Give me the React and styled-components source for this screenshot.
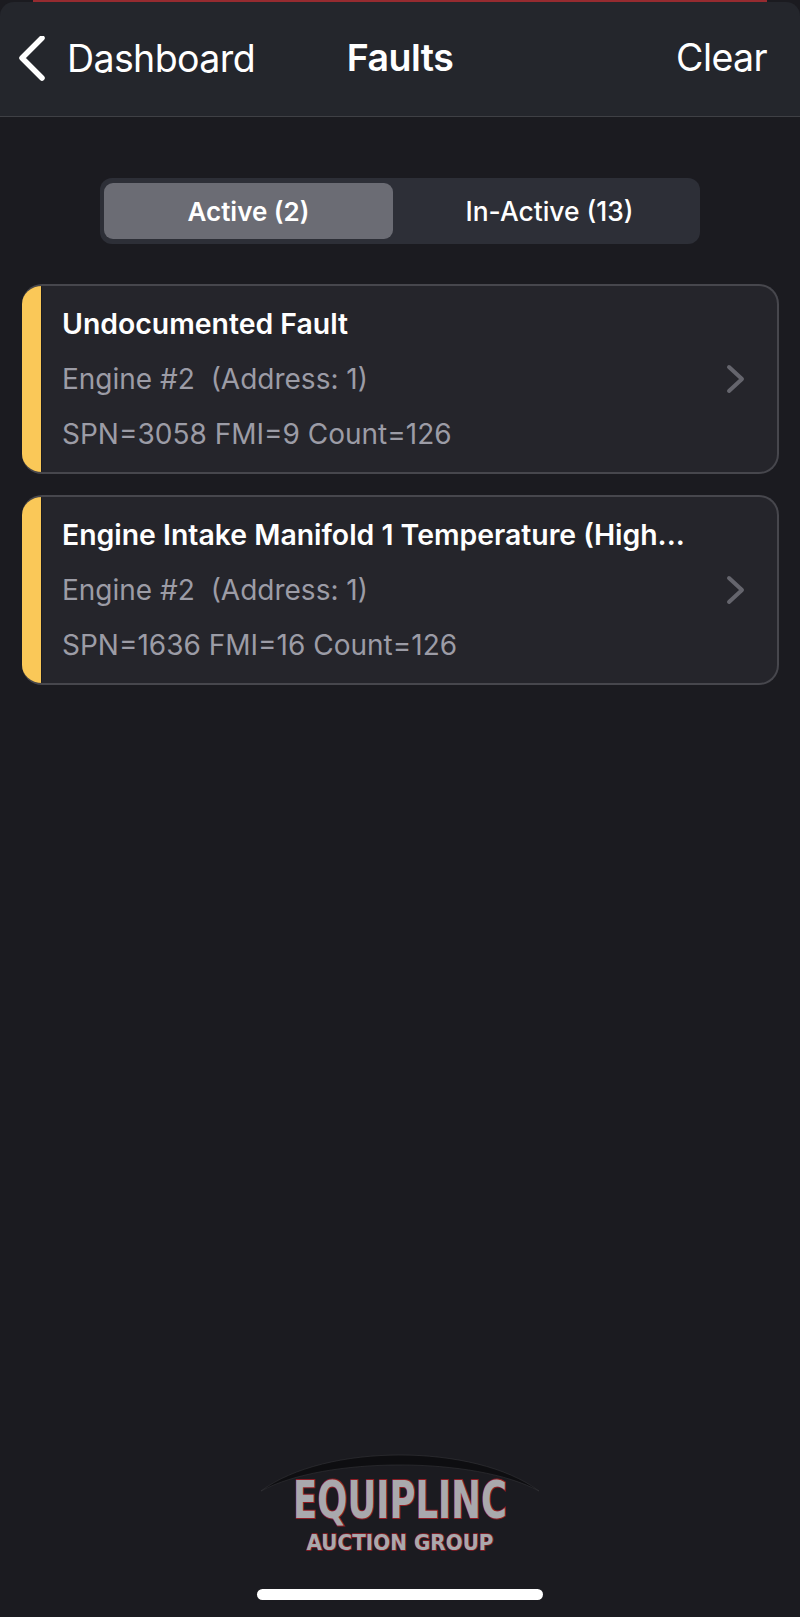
import React from "react";
import styled, { createGlobalStyle } from "styled-components";

const GlobalStyle = createGlobalStyle`
  html, body {
    margin: 0;
    padding: 0;
    background: #1b1b20;
  }
  * {
    box-sizing: border-box;
  }
`;

const Page = styled.div`
  width: 800px;
  height: 1617px;
  display: flex;
  flex-direction: column;
  background: #1b1b20;
  font-family: Inter, "Liberation Sans", sans-serif;
  color: #fff;
  overflow: hidden;
`;
const TopLine = styled.div`
  height: 3px;
  margin: 0 33px 0 33px;
  background: #962b30;
  flex-shrink: 0;
`;
const Header = styled.div`
  height: 115px;
  flex-shrink: 0;
  display: flex;
  align-items: flex-start;
  justify-content: space-between;
  padding: 34px 33px 0 18px;
  background: #24262c;
  border-radius: 14px 14px 0 0;
  border-bottom: 1px solid #3f4045;
  margin-top: -1px;
`;
const BackLink = styled.div`
  display: flex;
  align-items: center;
  gap: 21px;
  width: 311px;
  font-size: 37.5px;
  line-height: 44px;
  letter-spacing: -0.6px;
`;
const HeaderTitle = styled.div`
  font-size: 37.5px;
  line-height: 44px;
  font-weight: 600;
  letter-spacing: -0.5px;
`;
const HeaderAction = styled.div`
  width: 296px;
  text-align: right;
  font-size: 37.5px;
  line-height: 44px;
  letter-spacing: -0.6px;
`;
const Segmented = styled.div`
  width: 600px;
  height: 66px;
  margin: 61px auto 0;
  padding: 5px 4px;
  display: flex;
  background: #2d2f37;
  border-radius: 12px;
`;
const Segment = styled.div`
  width: ${({ $active }) => ($active ? "289px" : "303px")};
  height: 56px;
  display: flex;
  align-items: center;
  justify-content: center;
  border-radius: 9px;
  font-size: ${({ $active }) => ($active ? "26px" : "26.4px")};
  font-weight: ${({ $active }) => ($active ? 600 : 500)};
  background: ${({ $active }) => ($active ? "#6b6c74" : "transparent")};
  padding-left: ${({ $active }) => ($active ? "0" : "10px")};
`;
const List = styled.div`
  display: flex;
  flex-direction: column;
  gap: 21px;
  margin: 40px 21px 0 22px;
`;
const Card = styled.div`
  height: 190px;
  display: flex;
  align-items: center;
  background: #25252b;
  border: 2px solid #47474d;
  border-left: none;
  border-radius: 20px;
  overflow: hidden;
`;
const Stripe = styled.div`
  width: 20px;
  align-self: stretch;
  margin: -2px 0;
  background: #fac858;
  border-right: 1px solid #1b1b20;
  flex-shrink: 0;
`;
const CardBody = styled.div`
  flex: 1;
  min-width: 0;
  display: flex;
  flex-direction: column;
  gap: 17px;
  padding: 0 0 0 20px;
`;
const CardTitle = styled.div`
  font-size: 28.4px;
  line-height: 38px;
  font-weight: 600;
  white-space: nowrap;
`;
const CardLine = styled.div`
  font-size: 28px;
  line-height: 38px;
  color: #9c9ca6;
  white-space: pre;
`;
const Chevron = styled.svg`
  width: 20px;
  height: 30px;
  margin-right: 31px;
  flex-shrink: 0;
`;
const Footer = styled.div`
  margin-top: auto;
  display: flex;
  flex-direction: column;
  align-items: center;
`;
const Logo = styled.svg`
  width: 290px;
  height: 110px;
  display: block;
  overflow: visible;
`;
const HomeBar = styled.div`
  width: 286px;
  height: 11px;
  margin: 28px 0 17px;
  border-radius: 6px;
  background: #fff;
`;

const faults = [
  { title: "Undocumented Fault", codes: "SPN=3058 FMI=9 Count=126" },
  {
    title: "Engine Intake Manifold 1 Temperature (High...",
    codes: "SPN=1636 FMI=16 Count=126",
  },
];

const App = () => {
  return (
    <Page>
      <GlobalStyle />
      <TopLine />
      <Header>
        <BackLink>
          <svg width="28" height="46" viewBox="0 0 28 46" fill="none">
            <path
              d="M24 2 L4 22 L24 42"
              stroke="#fff"
              strokeWidth="5.5"
              strokeLinecap="round"
              strokeLinejoin="round"
            />
          </svg>
          Dashboard
        </BackLink>
        <HeaderTitle>Faults</HeaderTitle>
        <HeaderAction>Clear</HeaderAction>
      </Header>
      <Segmented>
        <Segment $active>Active (2)</Segment>
        <Segment>In-Active (13)</Segment>
      </Segmented>
      <List>
        {faults.map((fault) => (
          <Card key={fault.codes}>
            <Stripe />
            <CardBody>
              <CardTitle>{fault.title}</CardTitle>
              <CardLine>Engine #2  (Address: 1)</CardLine>
              <CardLine>{fault.codes}</CardLine>
            </CardBody>
            <Chevron viewBox="0 0 20 30" fill="none">
              <path
                d="M3 3 L16 15 L3 27"
                stroke="#65656d"
                strokeWidth="4"
                strokeLinecap="round"
                strokeLinejoin="round"
              />
            </Chevron>
          </Card>
        ))}
      </List>
      <Footer>
        <Logo viewBox="0 0 290 110">
          <path d="M6 40 C70 -8 220 -8 284 40 C220 5.3 70 5.3 6 40 Z" fill="#0e0e11" stroke="#3a3a3e" strokeWidth="0.5" />
          <text
            x="145"
            y="67"
            textAnchor="middle"
            textLength="214"
            lengthAdjust="spacingAndGlyphs"
            fontFamily="'DejaVu Sans', sans-serif"
            fontWeight="700"
            fontSize="52"
            fill="#a9a9ad"
            stroke="#8e1c24"
            strokeWidth="2"
            paintOrder="stroke"
          >
            EQUIPLINC
          </text>
          <text
            x="145"
            y="99"
            textAnchor="middle"
            textLength="187"
            lengthAdjust="spacingAndGlyphs"
            fontFamily="'DejaVu Sans', sans-serif"
            fontWeight="700"
            fontSize="22"
            fill="#a9a9ad"
            stroke="#8e1c24"
            strokeWidth="1.4"
            paintOrder="stroke"
          >
            AUCTION GROUP
          </text>
        </Logo>
        <HomeBar />
      </Footer>
    </Page>
  );
};

export default App;
